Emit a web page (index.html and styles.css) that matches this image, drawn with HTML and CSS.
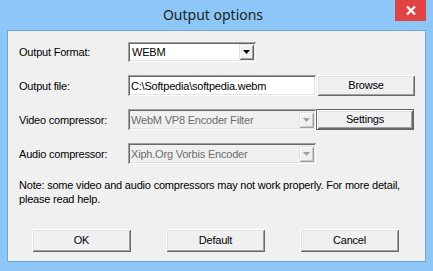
FILE: index.html
```html
<!DOCTYPE html>
<html>
<head>
<meta charset="utf-8">
<link rel="stylesheet" href="styles.css">
</head>
<body>
<div class="window">
  <div class="titlebar">
    <div class="title">Output options</div>
    <div class="close">
      <svg width="10" height="9" viewBox="0 0 10 9"><path d="M1 0.5 L9 8.5 M9 0.5 L1 8.5" stroke="#fff" stroke-width="2.2"/></svg>
    </div>
  </div>
  <div class="client">
    <div class="form">
      <div class="label">Output Format:</div>
      <div class="field combo short">
        <span class="val">WEBM</span>
        <span class="arrow"><svg width="7" height="4" viewBox="0 0 7 4"><path d="M0 0 H7 L3.5 4 Z" fill="#000"/></svg></span>
      </div>
      <div></div>

      <div class="label">Output file:</div>
      <div class="field text"><span class="val">C:\Softpedia\softpedia.webm</span></div>
      <div class="btn browse">Browse</div>

      <div class="label">Video compressor:</div>
      <div class="field combo disabled">
        <span class="val">WebM VP8 Encoder Filter</span>
        <span class="arrow"><svg width="7" height="4" viewBox="0 0 7 4"><path d="M0 0 H7 L3.5 4 Z" fill="#a0a0a0"/></svg></span>
      </div>
      <div class="btn settings">Settings</div>

      <div class="label">Audio compressor:</div>
      <div class="field combo disabled">
        <span class="val">Xiph.Org Vorbis Encoder</span>
        <span class="arrow"><svg width="7" height="4" viewBox="0 0 7 4"><path d="M0 0 H7 L3.5 4 Z" fill="#a0a0a0"/></svg></span>
      </div>
      <div></div>
    </div>
    <p class="note">Note: some video and audio compressors may not work properly. For more detail,<br>please read help.</p>
    <div class="buttons">
      <div class="btn">OK</div>
      <div class="btn">Default</div>
      <div class="btn">Cancel</div>
    </div>
  </div>
</div>
</body>
</html>
```
FILE: styles.css
```css
html, body {
  margin: 0;
  padding: 0;
  background: #8cc7f7;
}
.window {
  width: 433px;
  height: 271px;
  box-sizing: border-box;
  background: #8cc7f7;
  padding: 0 7px 9px 7px;
  display: flex;
  flex-direction: column;
  font-family: "Liberation Sans", Arial, sans-serif;
  font-size: 11px;
  letter-spacing: -0.2px;
  color: #000;
}
.titlebar {
  height: 30px;
  display: grid;
  grid-template-columns: 1fr;
  margin: 0 -7px;
  padding-right: 7px;
  letter-spacing: 0;
}
.title, .close {
  grid-row: 1;
  grid-column: 1;
}
.title {
  justify-self: center;
  margin-top: 5px;
  font-family: "Noto Sans", "Open Sans", sans-serif;
  font-size: 14px;
  color: #1e1e1e;
  line-height: 20px;
}
.close {
  justify-self: end;
  align-self: start;
  width: 31px;
  height: 21px;
  background: #e04343;
  display: flex;
  align-items: center;
  justify-content: center;
}
.client {
  flex: 1;
  border: 1px solid #6fa6d6;
  background: #f0f0f0;
  padding: 11px 0 0 11px;
}
.form {
  display: grid;
  grid-template-columns: 109px 188px 98px;
  grid-template-rows: 20px 21px 21px 21px;
  row-gap: 13px;
  align-items: center;
}
.label {
  line-height: 14px;
}
.field {
  box-sizing: border-box;
  height: 100%;
  background: #fff;
  box-shadow: inset 1px 1px #a0a0a0, inset -1px -1px #fff, inset 2px 2px #696969, inset -2px -2px #e3e3e3;
  display: flex;
  align-items: center;
  padding: 0 2px 0 3px;
}
.field.short {
  width: 128px;
}
.field .val {
  flex: 1;
  white-space: nowrap;
  overflow: hidden;
}
.field.short .val {
  padding-left: 1px;
}
.field.disabled {
  background: #f0f0f0;
  color: #6d6d6d;
}
.arrow {
  box-sizing: border-box;
  width: 15px;
  height: 16px;
  background: #f0f0f0;
  box-shadow: inset 1px 1px #e3e3e3, inset -1px -1px #696969, inset 2px 2px #fff, inset -2px -2px #a0a0a0;
  display: flex;
  align-items: center;
  justify-content: center;
}
.field.disabled .arrow {
  box-shadow: inset 1px 1px #e3e3e3, inset -1px -1px #a0a0a0, inset 2px 2px #fff, inset -2px -2px #c8c8c8;
}
.btn {
  box-sizing: border-box;
  height: 100%;
  background: #f0f0f0;
  box-shadow: inset 1px 1px #fff, inset -1px -1px #696969, inset 2px 2px #e3e3e3, inset -2px -2px #a0a0a0;
  display: flex;
  align-items: center;
  justify-content: center;
  padding-bottom: 1px;
}
.btn.browse {
  margin-left: 1px;
  margin-right: -1px;
}
.btn.settings {
  box-shadow: inset 0 0 0 1px #646464, inset 2px 2px #fff, inset -2px -2px #696969, inset 3px 3px #e3e3e3, inset -3px -3px #a0a0a0;
}
.note {
  margin: 14px 0 0 0;
  line-height: 14px;
}
.buttons {
  display: flex;
  margin: 23px 0 0 13px;
  gap: 35px;
}
.buttons .btn {
  width: 99px;
  height: 23px;
}
```
